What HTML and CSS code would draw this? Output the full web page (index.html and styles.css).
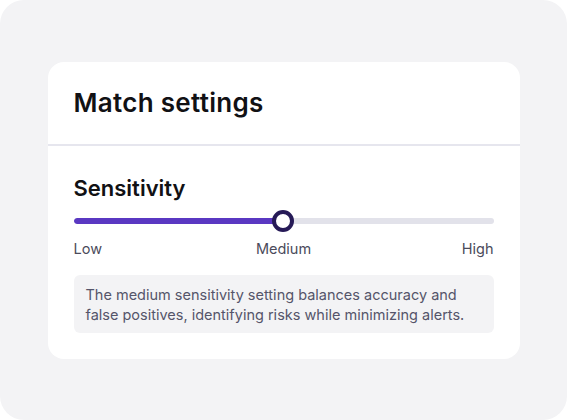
FILE: index.html
```html
<!DOCTYPE html>
<html lang="en">
<head>
<meta charset="utf-8">
<title>Match settings</title>
<link rel="stylesheet" href="styles.css">
</head>
<body>
<div class="frame">
  <section class="card">
    <header class="card-header">
      <h1 class="card-title">Match settings</h1>
    </header>
    <div class="card-body">
      <h2 class="section-title">Sensitivity</h2>
      <div class="slider">
        <div class="track">
          <div class="fill" style="width: 50%"></div>
        </div>
        <div class="thumb" style="left: 50%"></div>
      </div>
      <div class="labels">
        <span>Low</span>
        <span class="mid">Medium</span>
        <span class="end">High</span>
      </div>
      <p class="info">The medium sensitivity setting balances accuracy and false positives, identifying risks while minimizing alerts.</p>
    </div>
  </section>
</div>
</body>
</html>
```
FILE: styles.css
```css
* { box-sizing: border-box; }
html, body {
  margin: 0;
  padding: 0;
  background: #ffffff;
  font-family: Inter, "Noto Sans", "Liberation Sans", sans-serif;
}
.frame {
  width: 567px;
  height: 420px;
  background: #f3f3f5;
  border-radius: 24px;
  display: flex;
  align-items: center;
  justify-content: center;
}
.card {
  width: 472px;
  background: #ffffff;
  border-radius: 16px;
}
.card-header {
  padding: 25px 26px 25px;
  border-bottom: 2px solid #e6e6ee;
}
.card-title {
  margin: 0;
  font-size: 26px;
  line-height: 32px;
  font-weight: 600;
  letter-spacing: 0.3px;
  color: #111114;
}
.card-body {
  padding: 28px 26px 26px;
}
.section-title {
  margin: 0;
  font-size: 22px;
  line-height: 28px;
  font-weight: 600;
  color: #111114;
}
.slider {
  position: relative;
  height: 22px;
  margin-top: 8px;
  display: flex;
  align-items: center;
}
.track {
  width: 100%;
  height: 6px;
  border-radius: 3px;
  background: #e2e2ea;
  overflow: hidden;
}
.fill {
  height: 100%;
  background: #5a38c2;
  border-radius: 3px;
}
.thumb {
  position: absolute;
  top: 0;
  width: 22px;
  height: 22px;
  margin-left: -12px;
  border-radius: 50%;
  background: #ffffff;
  border: 4px solid #261a57;
}
.labels {
  margin-top: 7px;
  display: grid;
  grid-template-columns: 1fr auto 1fr;
  font-size: 14.5px;
  line-height: 20px;
  color: #4b4b5b;
}
.labels .end { text-align: right; }
.info {
  margin: 16px 0 0;
  padding: 10px 12px 8px;
  background: #f3f3f5;
  border-radius: 6px;
  font-size: 14.5px;
  line-height: 20px;
  color: #55556a;
}
```
